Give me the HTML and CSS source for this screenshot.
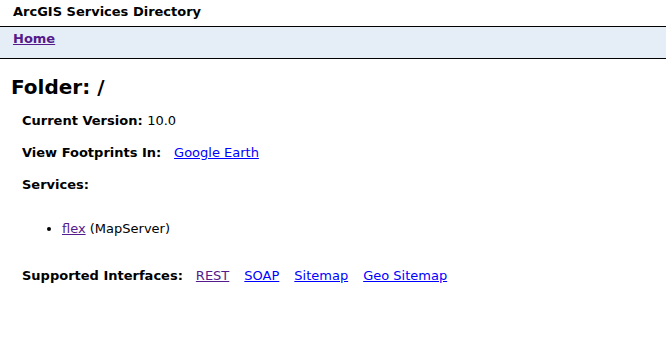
FILE: index.html
```html
<!DOCTYPE html>
<html lang="en">

<head>
    <meta charset="UTF-8">
    <title>Folder: /</title>
    <link rel="stylesheet" href="styles.css">
</head>

<body>
    <!-- Title Bar -->
    <div class="user-bar">
        <span class="title-cell">ArcGIS Services Directory</span>
    </div>

    <!-- Breadcrumbs -->
    <div class="nav-bar">
        <a class="breadcrumbs visited" href="#">Home</a>
    </div>

    <h2 class="folder-title">Folder: /</h2>

    <div class="rbody">
        <b>Current Version: </b>10.0<br><br>
        <b>View Footprints In: </b>&nbsp;&nbsp;<a href="#">Google Earth</a><br><br>
        <b>Services: </b><br><br>
        <ul class="service-list">
            <li><a class="visited" href="#">flex</a> (MapServer)</li>
        </ul>
        <div class="interfaces">
            <b>Supported Interfaces:</b>
            <a class="visited" href="#">REST</a>
            <a href="#">SOAP</a>
            <a href="#">Sitemap</a>
            <a href="#">Geo Sitemap</a>
        </div>
    </div>
</body>

</html>
```

FILE: styles.css
```css
/* General Styles */
body {
    font-family: "DejaVu Sans", Verdana, sans-serif;
    font-size: 13px;
    line-height: 16px;
    color: #000;
    background-color: #fff;
    margin: 0;
    padding: 0;
}

a {
    color: #0000ff;
}

a.visited {
    color: #551a8b;
}

/* Title Bar */
.user-bar {
    padding: 4px 13px 2px;
    height: 20px;
    border-bottom: 1px solid #000;
}

.title-cell {
    font-weight: bold;
}

/* Breadcrumbs */
.nav-bar {
    background-color: #e5eef7;
    padding: 4px 13px 0;
    height: 27px;
    border-bottom: 1px solid #000;
}

.breadcrumbs {
    font-weight: bold;
}

.folder-title {
    font-size: 20px;
    line-height: 24px;
    margin: 16px 11px 14px;
}

.rbody {
    padding: 0 22px;
}

.service-list {
    margin: 12px 0 31px;
    padding-left: 40px;
}

/* Supported interfaces row */
.interfaces {
    display: flex;
    gap: 15px;
}

.interfaces b {
    margin-right: -2px;
}
```
